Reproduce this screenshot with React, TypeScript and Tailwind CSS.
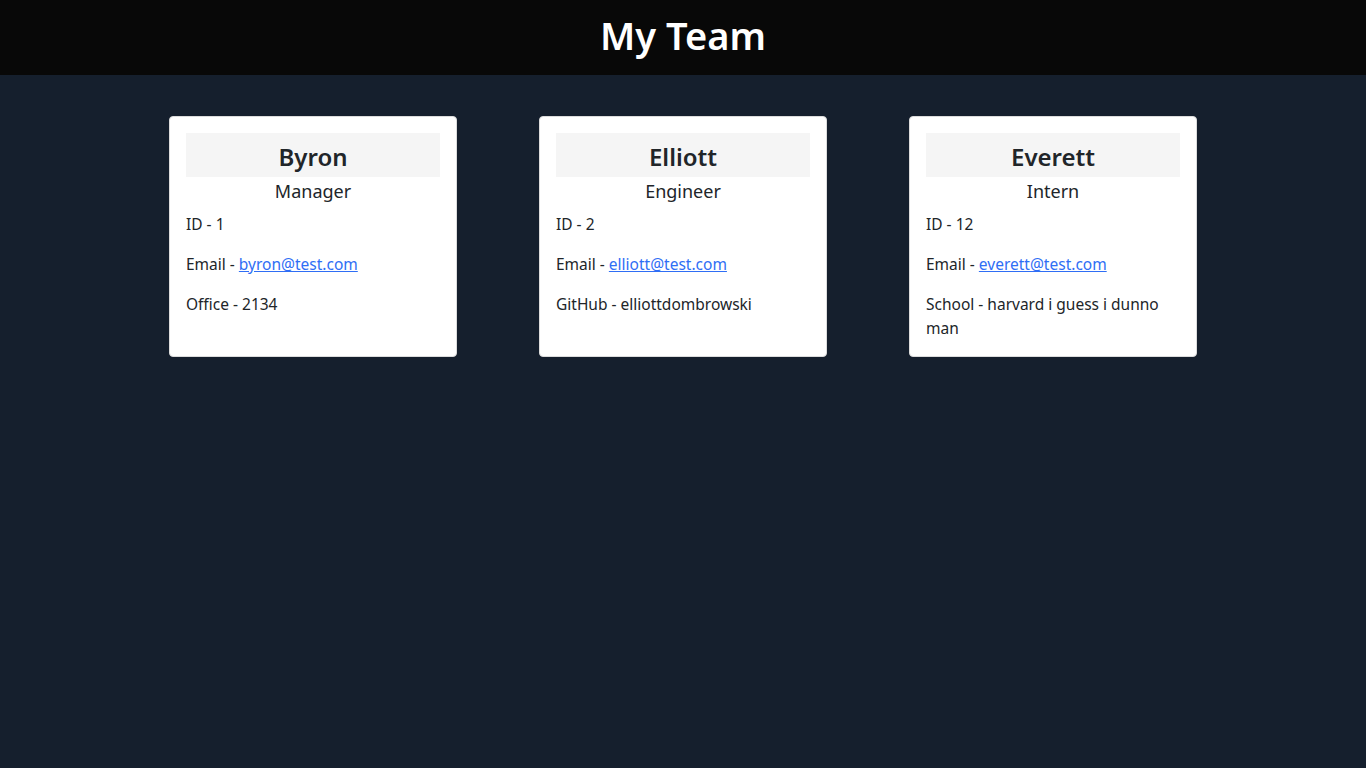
import React from "react";

type Member = { name: string; role: string; id: string; email: string; extraLabel: string; extra: string };

const members: Member[] = [
  { name: "Byron", role: "Manager", id: "1", email: "byron@test.com", extraLabel: "Office", extra: "2134" },
  { name: "Elliott", role: "Engineer", id: "2", email: "elliott@test.com", extraLabel: "GitHub", extra: "elliottdombrowski" },
  { name: "Everett", role: "Intern", id: "12", email: "everett@test.com", extraLabel: "School", extra: "harvard i guess i dunno man" },
];

function Card({ m }: { m: Member }) {
  return (
    <div className="w-[288px] bg-white border border-[#dcdcdc] rounded-[4px] px-4 pt-4 pb-4 text-[#212529]">
      <div className="bg-[#f5f5f5] h-[44px] flex items-center justify-center pt-[4px] text-[24px] font-semibold leading-none">
        {m.name}
      </div>
      <div className="text-center text-[18px] leading-[27px] mt-[1px]">{m.role}</div>
      <div className="mt-[7px] text-[15.5px] leading-[24px] flex flex-col gap-4">
        <p>ID - {m.id}</p>
        <p>
          Email - <a href="#" className="text-[#2f6ef5] underline">{m.email}</a>
        </p>
        <p>
          {m.extraLabel} - {m.extra}
        </p>
      </div>
    </div>
  );
}

export default function App() {
  return (
    <div className="min-h-[768px] bg-[#151f2d]" style={{ fontFamily: '"Noto Sans", "Open Sans", sans-serif' }}>
      <header className="h-[75px] bg-[#080808] flex items-center justify-center pb-[6px]">
        <h1 className="text-white text-[38px] font-semibold leading-none">My Team</h1>
      </header>
      <main className="flex justify-center gap-[82px] pt-[41px]">
        {members.map((m) => (
          <Card key={m.name} m={m} />
        ))}
      </main>
    </div>
  );
}
